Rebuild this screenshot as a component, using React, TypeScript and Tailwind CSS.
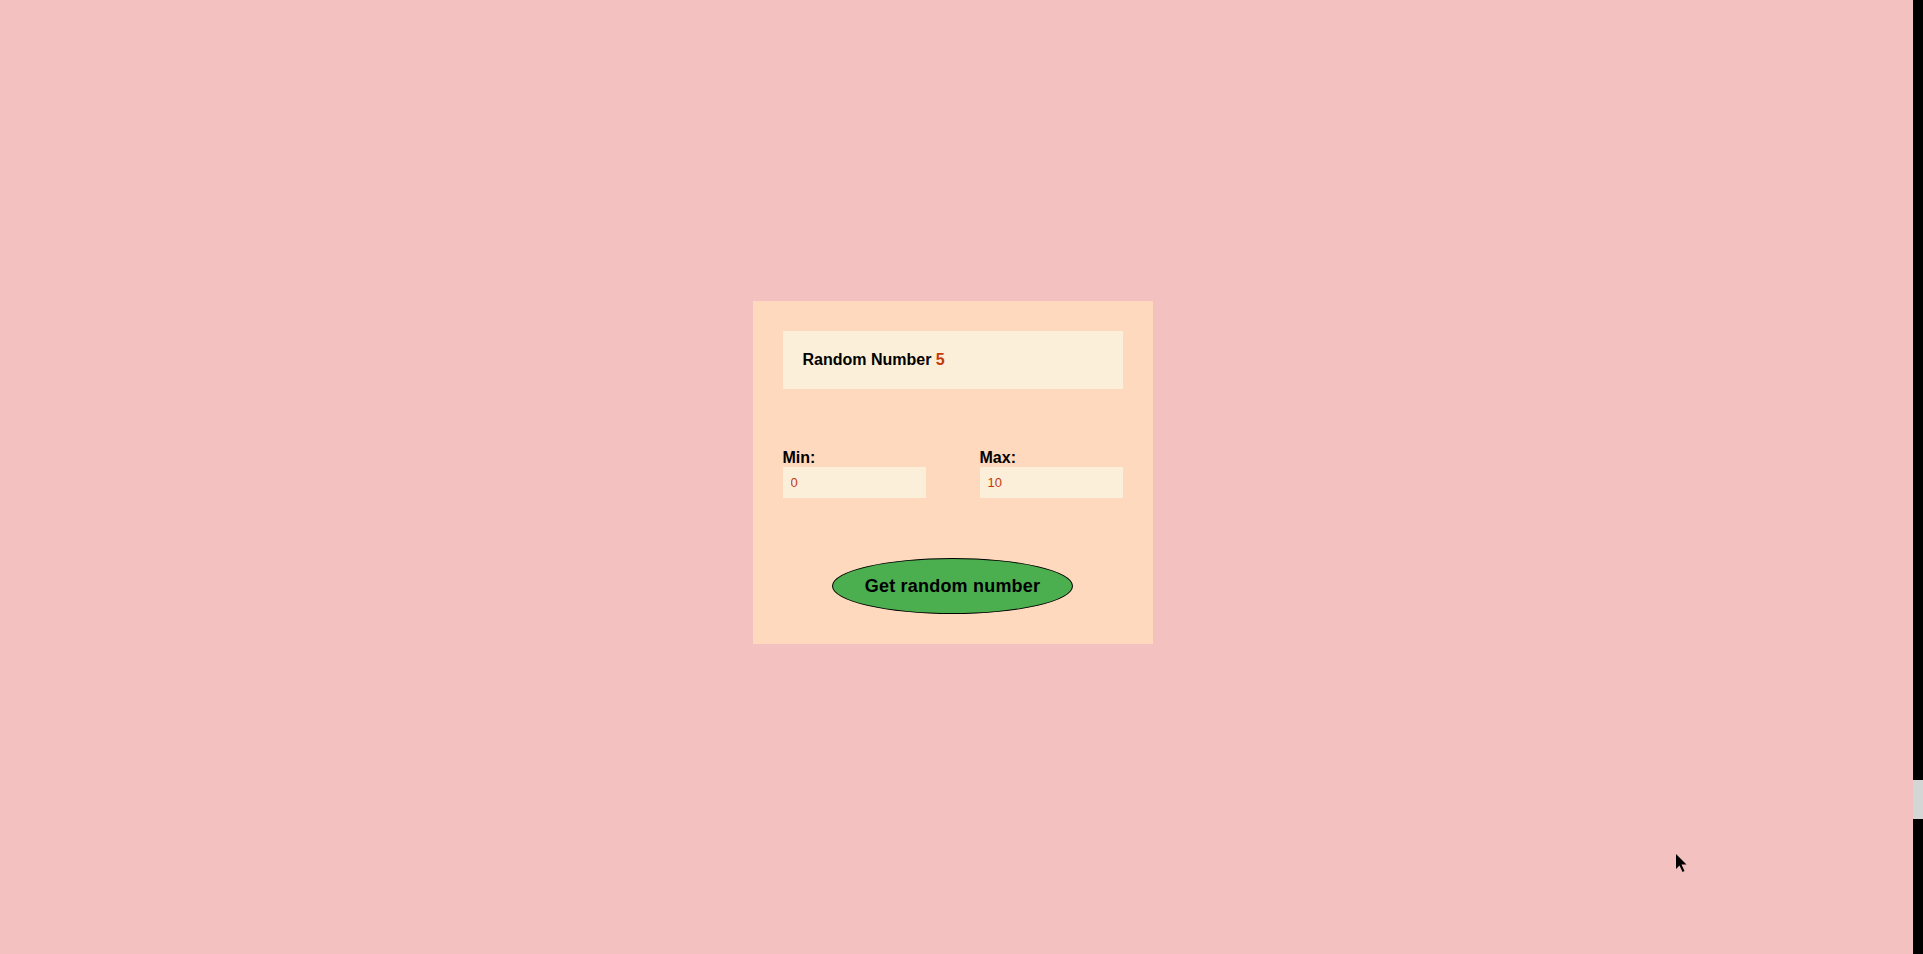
export default function App() {
  return (
    <div className="flex h-screen w-full bg-[#f4c1c1] font-['Liberation_Sans',Arial,sans-serif]">
      {/* Page */}
      <main className="relative flex flex-1 items-center justify-center">
        <div className="-mt-[9px] -ml-[8px] flex w-[400px] flex-col bg-[#fed9bd] p-[30px]">
          {/* Result */}
          <div className="flex h-[58px] items-center bg-[#fcefd9] pl-5 text-[16px] font-bold text-black">
            <span>
              Random Number <span className="text-[#c23a0c]">5</span>
            </span>
          </div>

          {/* Range */}
          <div className="mt-[59px] flex justify-between">
            <label className="flex flex-col">
              <span className="h-[19px] text-[16px] leading-[19px] font-bold text-black">Min:</span>
              <input
                type="number"
                defaultValue={0}
                className="h-[31px] w-[143px] bg-[#fcefd9] px-2 text-[13px] text-[#c23a0c] outline-none"
              />
            </label>
            <label className="flex flex-col">
              <span className="h-[19px] text-[16px] leading-[19px] font-bold text-black">Max:</span>
              <input
                type="number"
                defaultValue={10}
                className="h-[31px] w-[143px] bg-[#fcefd9] px-2 text-[13px] text-[#c23a0c] outline-none"
              />
            </label>
          </div>

          {/* Button */}
          <div className="mt-[60px] flex justify-center">
            <button className="h-[56px] w-[241px] rounded-[50%] border border-black bg-[#4bae4f] text-[18px] font-bold tracking-[0.2px] text-black">
              Get random number
            </button>
          </div>
        </div>

        {/* Mouse cursor */}
        <svg
          className="absolute left-[1675px] top-[853px]"
          width="14"
          height="22"
          viewBox="0 0 14 22"
        >
          <path d="M1 1 L1 16 L4.5 12.5 L7.5 19 L9.5 18 L6.5 11.5 L11.5 11.5 Z" fill="#000" />
        </svg>
      </main>

      {/* Scrollbar */}
      <div className="flex w-[10px] flex-col bg-black">
        <div className="h-[780px]" />
        <div className="h-[39px] bg-[#d3d6d5]" />
      </div>
    </div>
  );
}
